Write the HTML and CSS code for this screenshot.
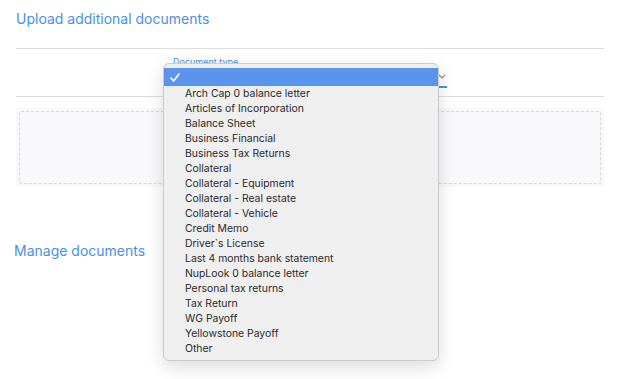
FILE: index.html
```html
<!DOCTYPE html>
<html lang="en">
<head>
  <meta charset="UTF-8">
  <meta name="viewport" content="width=device-width, initial-scale=1.0">
  <title>Documents</title>
  <link rel="stylesheet" href="styles.css">
</head>
<body>
  <div class="page">
    <h2 class="section-title">Upload additional documents</h2>

    <div class="upload-row">
      <div class="field">
        <label class="field-label">Document type</label>
        <div class="select-box">
          <span class="chevron">
            <svg width="8" height="5" viewBox="0 0 8 5"><path d="M1 1l3 3 3-3" fill="none" stroke="#8a8a8a" stroke-width="1.1"/></svg>
          </span>
        </div>
      </div>
    </div>

    <div class="dropzone">
      <div class="dropzone-inner"></div>
    </div>

    <h2 class="section-title manage">Manage documents</h2>

    <!-- open select menu -->
    <div class="menu">
      <div class="menu-item selected">
        <svg class="check" width="10" height="9" viewBox="0 0 10 9"><path d="M1 5l2.6 3L9 1" fill="none" stroke="#fff" stroke-width="1.6" stroke-linecap="round" stroke-linejoin="round"/></svg>
      </div>
      <div class="menu-item">Arch Cap 0 balance letter</div>
      <div class="menu-item">Articles of Incorporation</div>
      <div class="menu-item">Balance Sheet</div>
      <div class="menu-item">Business Financial</div>
      <div class="menu-item">Business Tax Returns</div>
      <div class="menu-item">Collateral</div>
      <div class="menu-item">Collateral - Equipment</div>
      <div class="menu-item">Collateral - Real estate</div>
      <div class="menu-item">Collateral - Vehicle</div>
      <div class="menu-item">Credit Memo</div>
      <div class="menu-item">Driver`s License</div>
      <div class="menu-item">Last 4 months bank statement</div>
      <div class="menu-item">NupLook 0 balance letter</div>
      <div class="menu-item">Personal tax returns</div>
      <div class="menu-item">Tax Return</div>
      <div class="menu-item">WG Payoff</div>
      <div class="menu-item">Yellowstone Payoff</div>
      <div class="menu-item">Other</div>
    </div>
  </div>
</body>
</html>
```

FILE: styles.css
```css
body {
  margin: 0;
  font-family: Inter, "Noto Sans", sans-serif;
  background: #fff;
}

.page {
  position: relative;
  width: 588px;
  min-height: 379px;
  padding: 0 22px 0 16px;
}

.section-title {
  margin: 0;
  padding-top: 10px;
  font-size: 14px;
  font-weight: 400;
  color: #4a90e2;
  line-height: 18px;
  height: 38px;
  border-bottom: 1px solid #dcdcdc;
}

.upload-row {
  height: 47px;
  border-bottom: 1px solid #dcdcdc;
  display: flex;
  justify-content: center;
}

.field {
  width: 274px;
  padding-top: 8px;
}

.field-label {
  display: block;
  font-size: 9px;
  line-height: 10px;
  color: #4a90e2;
}

.select-box {
  height: 19px;
  border-bottom: 2px solid #4a90e2;
  display: flex;
  justify-content: flex-end;
  align-items: center;
}

.chevron {
  display: flex;
  margin-right: 1px;
}

.dropzone {
  margin-top: 11px;
  height: 79px;
  padding: 3px;
  box-sizing: border-box;
  background: #f9f9fb;
  border-radius: 3px;
}

.dropzone-inner {
  height: 100%;
  box-sizing: border-box;
  border: 1px dashed #d9d9dc;
  border-radius: 2px;
}

.section-title.manage {
  margin-top: 50px;
  margin-left: -2px;
  padding-top: 5px;
  border-bottom: none;
}

.menu {
  position: absolute;
  left: 163px;
  top: 63px;
  width: 274px;
  padding: 4px 0;
  background: #efefef;
  border: 1px solid #cbcbcb;
  border-radius: 6px;
  box-shadow: 0 6px 18px rgba(0, 0, 0, 0.14);
}

.menu-item {
  height: 15px;
  line-height: 15px;
  padding-left: 21px;
  font-size: 10.4px;
  color: #2a2a2a;
  white-space: nowrap;
}

.menu-item.selected {
  height: 18px;
  padding-left: 6px;
  background: #5b94ec;
  display: flex;
  align-items: center;
}
```
